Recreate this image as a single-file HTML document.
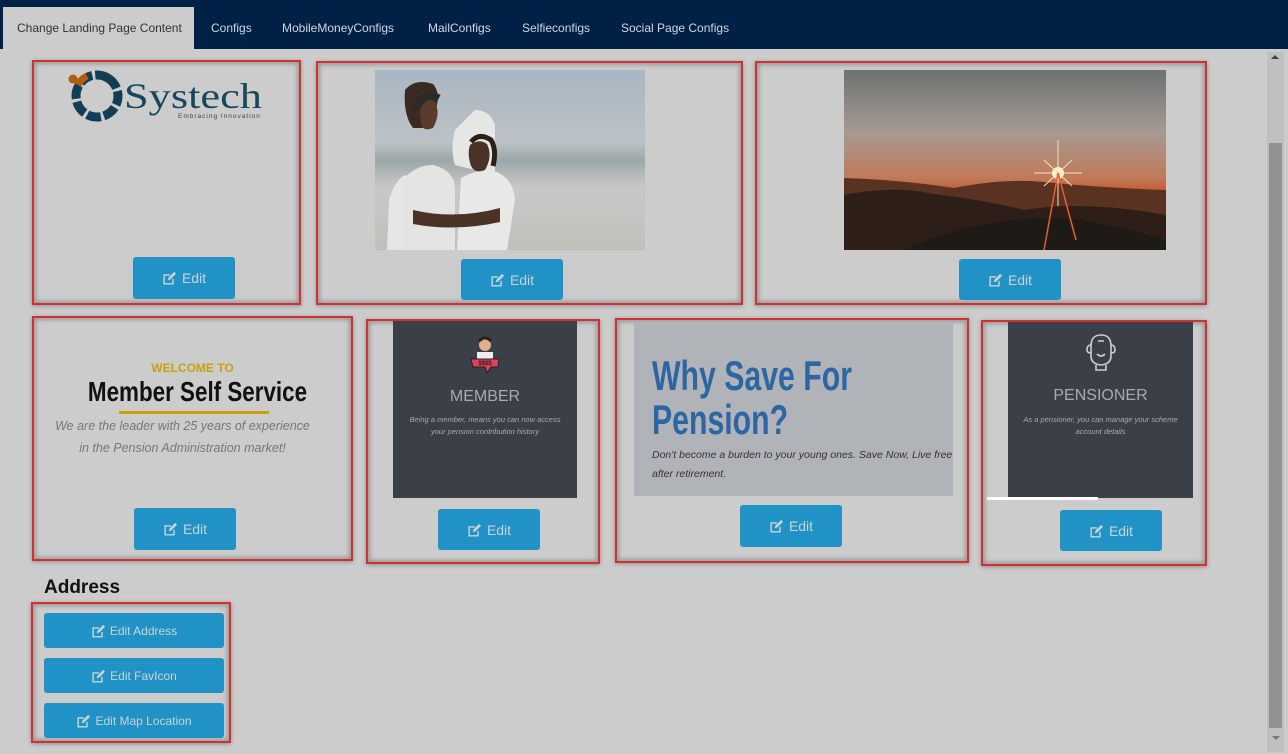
<!DOCTYPE html>
<html><head><meta charset="utf-8"><style>
*{margin:0;padding:0;box-sizing:border-box}
body{width:1288px;height:754px;background:#cccccc;font-family:"Liberation Sans",sans-serif;position:relative;overflow:hidden}
.nav{position:absolute;left:0;top:0;width:1288px;height:49px;background:#002145}
.tab{position:absolute;top:21px;font-size:12px;color:#d0d6e0}
.tab.act{top:7px;left:3px;width:191px;height:42px;background:#cccccc;color:#333;padding-top:14px;padding-left:14px}
.box{position:absolute;border:2px solid #d13131;box-shadow:0 0 4px 2px rgba(0,0,0,.25) inset,0 1px 4px rgba(0,0,0,.3)}
.btn{position:absolute;background:#2192c5;border-radius:3px;color:#c9d4da;font-size:14px;display:flex;align-items:center;justify-content:center;gap:5px}
.ic{display:inline-block;width:15px;height:14px}
.abs{position:absolute}
</style></head><body>
<div class="nav">
<div class="tab act">Change Landing Page Content</div>
<div class="tab" style="left:211px">Configs</div>
<div class="tab" style="left:282px">MobileMoneyConfigs</div>
<div class="tab" style="left:428px">MailConfigs</div>
<div class="tab" style="left:522px">Selfieconfigs</div>
<div class="tab" style="left:621px">Social Page Configs</div>
</div>

<svg width="0" height="0" style="position:absolute"><defs>
<symbol id="e" viewBox="0 0 16 15"><path d="M1.5 3.5h7v1.5h-5.5v8h8v-4.5h1.5v6h-11z" fill="#c9d4da"/><path d="M6 10l1-3 6-6 2 2-6 6z" fill="#c9d4da"/></symbol>
</defs></svg>

<!-- box1 -->
<div class="box" style="left:32px;top:60px;width:269px;height:245px"></div>
<svg class="abs" style="left:66px;top:66px" width="200" height="60">
<circle cx="7" cy="13" r="4.5" fill="#b25c12"/>
<circle cx="31" cy="30" r="21" fill="none" stroke="#123e55" stroke-width="9" stroke-dasharray="14 3" transform="rotate(-60 31 30)"/>
<path d="M12 19 q3 -6 9 -9" stroke="#b25c12" stroke-width="7" fill="none"/>
<text x="58" y="42" font-family="Liberation Serif" font-size="36" fill="#16475e" textLength="138" lengthAdjust="spacingAndGlyphs">Systech</text>
<text x="112" y="52" font-size="6.5" fill="#444" letter-spacing="1">Embracing Innovation</text>
</svg>
<div class="btn" style="left:133px;top:257px;width:102px;height:42px"><svg class="ic"><use href="#e"/></svg>Edit</div>

<!-- box2 -->
<div class="box" style="left:316px;top:61px;width:427px;height:244px"></div>
<svg class="abs" style="left:375px;top:70px" width="270" height="180">
<defs><linearGradient id="sky" x1="0" y1="0" x2="0" y2="1"><stop offset="0" stop-color="#a9b6c2"/><stop offset=".4" stop-color="#bcc2c6"/><stop offset=".5" stop-color="#9aa7a8"/><stop offset=".65" stop-color="#c8c8c6"/><stop offset="1" stop-color="#c2c0bc"/></linearGradient></defs>
<rect width="270" height="180" fill="url(#sky)"/>
<path d="M20 180 L24 130 Q26 115 34 110 L45 105 Q55 110 62 115 L70 180Z" fill="#3e2e24"/>
<path d="M12 180 L14 130 Q20 110 30 105 L62 115 L68 180Z" fill="#e6e6e4"/>
<path d="M100 40 Q115 40 120 55 L120 105 L80 95 Q75 80 80 60Z" fill="#e6e6e4"/>
<path d="M30 20 Q40 8 58 14 Q65 22 62 35 Q58 55 48 58 L38 58 Q28 45 30 20Z" fill="#3a2a22"/>
<path d="M25 18 Q45 0 72 18 L82 60 Q70 70 52 62Z" fill="none"/>
<path d="M40 55 L40 100 Q45 180 50 180" fill="none"/>
<path d="M28 180 L28 110 Q40 95 58 95 Q80 100 80 120 L80 180Z" fill="#e4e4e2"/>
<path d="M82 180 L86 108 Q100 100 115 100 Q138 105 140 130 L132 180Z" fill="#e8e8e6"/>
<path d="M95 75 Q104 68 112 74 Q118 86 110 100 Q100 104 96 96 Q92 84 95 75Z" fill="#4a3326"/>
<path d="M96 72 Q104 62 116 70 Q122 80 118 96" stroke="#2a2018" stroke-width="5" fill="none"/>
<path d="M45 40 Q52 26 60 32 Q66 44 58 58 Q48 62 46 54Z" fill="#5a3c2c"/>
<path d="M40 38 Q48 20 64 28" stroke="#2a2a28" stroke-width="7" fill="none"/>
<path d="M38 140 Q80 150 125 138 L125 152 Q80 162 38 154Z" fill="#4a3326"/>
</svg>
<div class="btn" style="left:461px;top:259px;width:102px;height:41px"><svg class="ic"><use href="#e"/></svg>Edit</div>

<!-- box3 -->
<div class="box" style="left:755px;top:61px;width:452px;height:244px"></div>
<svg class="abs" style="left:844px;top:70px" width="322" height="180">
<defs><linearGradient id="ss" x1="0" y1="0" x2="0" y2="1"><stop offset="0" stop-color="#6e7272"/><stop offset=".35" stop-color="#a69a92"/><stop offset=".6" stop-color="#c07a58"/><stop offset=".68" stop-color="#c4582e"/><stop offset="1" stop-color="#7a3a20"/></linearGradient></defs>
<rect width="322" height="180" fill="url(#ss)"/>
<path d="M0 108 Q60 110 110 118 Q160 108 200 112 Q260 118 322 120 L322 180 L0 180Z" fill="#5a3222"/>
<path d="M0 125 Q50 115 90 124 Q140 130 180 140 Q240 130 322 145 L322 180 L0 180Z" fill="#2e1e18"/>
<path d="M60 180 Q150 140 240 150 Q290 160 322 170 L322 180Z" fill="#1e1a16"/>
<circle cx="214" cy="103" r="6" fill="#fff6e0"/>
<path d="M214 70 L214 136 M190 103 L238 103 M200 90 L228 116 M228 90 L200 116" stroke="#ffe0b0" stroke-width="1"/>
<path d="M214 103 L200 180 M214 103 L232 170" stroke="#e06030" stroke-width="1.5"/>
</svg>
<div class="btn" style="left:959px;top:259px;width:102px;height:41px"><svg class="ic"><use href="#e"/></svg>Edit</div>

<!-- box4 -->
<div class="box" style="left:32px;top:316px;width:321px;height:245px"></div>
<div class="abs" style="left:32px;top:361px;width:321px;text-align:center">
<div style="color:#c9a10f;font-weight:bold;font-size:12px">WELCOME TO</div>
<div style="font-weight:bold;font-size:28px;line-height:30px;color:#111;transform:scaleX(.8);margin-top:2px;position:relative;left:5px">Member Self Service</div>
<div style="width:150px;height:3px;background:#c9a10f;margin:4px auto 0 auto;position:relative;left:1px"></div>
<div style="font-style:italic;color:#777;font-size:12.5px;line-height:22px;margin-top:1px;margin-left:-20px">We are the leader with 25 years of experience<br>in the Pension Administration market!</div>
</div>
<div class="btn" style="left:134px;top:508px;width:102px;height:42px"><svg class="ic"><use href="#e"/></svg>Edit</div>

<!-- box5 -->
<div class="box" style="left:366px;top:319px;width:234px;height:245px"></div>
<div class="abs" style="left:393px;top:321px;width:184px;height:177px;background:#3b3f47;text-align:center;color:#bbb">
<svg width="40" height="44" style="margin-top:12px"><circle cx="20" cy="12" r="6" fill="#e3b08a"/><path d="M14 8 Q20 2 26 8" stroke="#222" stroke-width="3" fill="none"/><rect x="12" y="19" width="16" height="8" fill="#eee"/><path d="M6 26 L34 26 L33 34 L26 34 L22 40 L20 34 L8 34Z" fill="#e0405a" stroke="#222"/><text x="20" y="32" font-size="6" text-anchor="middle" fill="#222" font-weight="bold">$$$$</text></svg>
<div style="font-size:16px;margin-top:6px;color:#aaa">MEMBER</div>
<div style="font-style:italic;font-size:7.5px;line-height:12px;margin-top:8px;color:#aaa">Being a member, means you can now access<br>your pension contribution history</div>
</div>
<div class="btn" style="left:438px;top:509px;width:102px;height:41px"><svg class="ic"><use href="#e"/></svg>Edit</div>

<!-- box6 -->
<div class="box" style="left:615px;top:318px;width:354px;height:245px"></div>
<div class="abs" style="left:634px;top:322px;width:319px;height:174px;background:#b0b4b8">
<div style="position:absolute;left:18px;top:32px;color:#2e66a4;font-weight:bold;font-size:42px;line-height:44px;transform:scaleX(.72);transform-origin:left top;white-space:nowrap">Why Save For<br>Pension?</div>
<div style="position:absolute;left:18px;top:124px;font-style:italic;font-size:10.5px;line-height:19px;color:#333">Don't become a burden to your young ones. Save Now, Live free<br>after retirement.</div>
</div>
<div class="btn" style="left:740px;top:505px;width:102px;height:42px"><svg class="ic"><use href="#e"/></svg>Edit</div>

<!-- box7 -->
<div class="box" style="left:981px;top:320px;width:226px;height:246px"></div>
<div class="abs" style="left:1008px;top:322px;width:185px;height:176px;background:#3b3f47;text-align:center;color:#aaa">
<svg width="40" height="42" style="margin-top:10px" fill="none" stroke="#ccc" stroke-width="1.6"><path d="M10 14 Q10 3 20 3 Q30 3 30 14 L30 24 Q30 32 20 33 Q10 32 10 24Z"/><path d="M10 13 Q6 13 6 18 Q6 21 10 21 M30 13 Q34 13 34 18 Q34 21 30 21"/><path d="M17 9 H23"/><path d="M16 22 Q20 26 24 22"/><path d="M15 33 V38 H25 V33"/></svg>
<div style="font-size:16px;margin-top:8px">PENSIONER</div>
<div style="font-style:italic;font-size:7.5px;line-height:12px;margin-top:9px">As a pensioner, you can manage your scheme<br>account details</div>
</div>
<div class="abs" style="left:987px;top:497px;width:111px;height:3px;background:#fff"></div>
<div class="btn" style="left:1060px;top:510px;width:102px;height:41px"><svg class="ic"><use href="#e"/></svg>Edit</div>

<!-- address -->
<div class="abs" style="left:44px;top:577px;font-size:19px;font-weight:bold;color:#111">Address</div>
<div class="box" style="left:31px;top:602px;width:200px;height:141px"></div>
<div class="btn" style="left:44px;top:613px;width:180px;height:35px;font-size:12px;gap:4px"><svg class="ic"><use href="#e"/></svg>Edit Address</div>
<div class="btn" style="left:44px;top:658px;width:180px;height:35px;font-size:12px;gap:4px"><svg class="ic"><use href="#e"/></svg>Edit FavIcon</div>
<div class="btn" style="left:44px;top:703px;width:180px;height:35px;font-size:12px;gap:4px"><svg class="ic"><use href="#e"/></svg>Edit Map Location</div>

<!-- scrollbar -->
<div class="abs" style="left:1267px;top:52px;width:17px;height:700px;background:#c0c0c0"></div>
<div class="abs" style="left:1269px;top:143px;width:13px;height:585px;background:#929292"></div>
<div class="abs" style="left:1271px;top:55px;width:0;height:0;border-left:4px solid transparent;border-right:4px solid transparent;border-bottom:4px solid #444"></div>
<div class="abs" style="left:1272px;top:736px;width:0;height:0;border-left:4px solid transparent;border-right:4px solid transparent;border-top:4px solid #777"></div>
</body></html>
